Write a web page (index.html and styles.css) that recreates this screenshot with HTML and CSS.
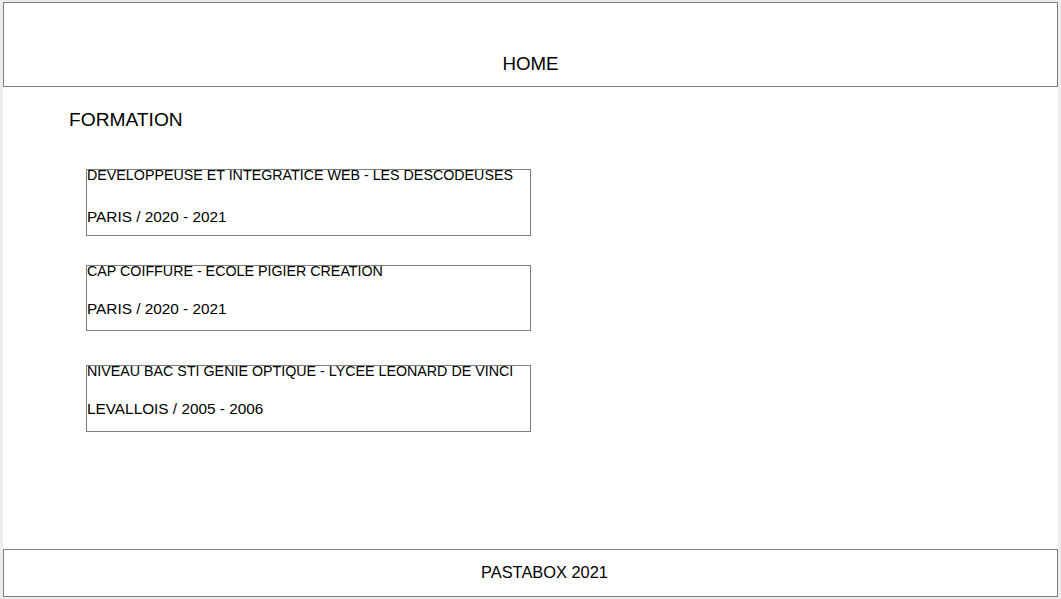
FILE: index.html
```html
<!DOCTYPE html>
<html lang="fr">
<head>
<meta charset="utf-8">
<title>Formation</title>
<link rel="stylesheet" href="styles.css">
</head>
<body>
  <header class="site-header">
    <span class="site-header__title">HOME</span>
  </header>
  <main class="content">
    <h2 class="section-title">FORMATION</h2>
    <div class="entries">
      <section class="entry entry--first">
        <p class="entry__title">DEVELOPPEUSE ET INTEGRATICE WEB - LES DESCODEUSES</p>
        <p class="entry__meta">PARIS / 2020 - 2021</p>
      </section>
      <section class="entry entry--second">
        <p class="entry__title">CAP COIFFURE - ECOLE PIGIER CREATION</p>
        <p class="entry__meta">PARIS / 2020 - 2021</p>
      </section>
      <section class="entry entry--third">
        <p class="entry__title">NIVEAU BAC STI GENIE OPTIQUE - LYCEE LEONARD DE VINCI</p>
        <p class="entry__meta">LEVALLOIS / 2005 - 2006</p>
      </section>
    </div>
  </main>
  <footer class="site-footer">PASTABOX 2021</footer>
</body>
</html>
```

FILE: styles.css
```css
html {
  background: #ececec;
  height: 100%;
}

body {
  margin: 2px 3px 2px 3px;
  height: calc(100% - 4px);
  background: #ffffff;
  font-family: "Liberation Sans", Arial, sans-serif;
  color: #000;
  display: flex;
  flex-direction: column;
  box-sizing: border-box;
}

.site-header {
  border: 1px solid #7d7d7d;
  height: 85px;
  box-sizing: border-box;
  display: flex;
  justify-content: center;
  align-items: flex-start;
  padding-top: 50px;
}

.site-header__title {
  font-size: 18.72px;
  line-height: 22px;
}

.content {
  flex: 1;
}

.section-title {
  margin: 22px 0 0 66px;
  font-size: 19.2px;
  line-height: 22px;
  font-weight: normal;
}

.entries {
  margin-top: 38px;
  margin-left: 83px;
  width: 445px;
  display: flex;
  flex-direction: column;
}

.entry {
  border: 1px solid #7d7d7d;
  box-sizing: border-box;
}

.entry p {
  margin: 0;
}

.entry__title {
  font-size: 14.27px;
  line-height: 10px;
  white-space: nowrap;
}

.entry__meta {
  font-size: 15.35px;
  line-height: 18px;
}

.entry--first {
  height: 67px;
}

.entry--first .entry__meta {
  margin-top: 28px;
}

.entry--second {
  height: 66px;
  margin-top: 29px;
}

.entry--second .entry__meta,
.entry--third .entry__meta {
  margin-top: 24px;
}

.entry--third {
  height: 67px;
  margin-top: 34px;
}

.site-footer {
  border: 1px solid #7d7d7d;
  height: 48px;
  box-sizing: border-box;
  display: flex;
  align-items: center;
  justify-content: center;
  padding-left: 28px;
  padding-bottom: 2px;
  font-size: 16.4px;
  line-height: 18px;
}
```
